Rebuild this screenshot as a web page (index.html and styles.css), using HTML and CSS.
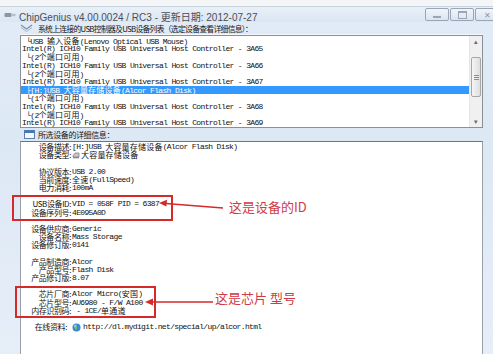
FILE: index.html
```html
<!DOCTYPE html>
<html lang="zh-CN">
  <head>
    <meta charset="UTF-8" />
    <meta name="viewport" content="width=device-width, initial-scale=1.0" />
    <title>ChipGenius v4.00.0024 / RC3</title>
    <link rel="stylesheet" href="styles.css">
  </head>
  <body>
    <div class="window">
      <div class="desk"></div>
      <div class="titlebar">
        <svg class="app-icon" width="12" height="8" viewBox="0 0 12 8">
          <rect x="0.5" y="2" width="7" height="4" rx="1" fill="#8a96a6" />
          <rect x="7.5" y="2.8" width="4" height="2.4" fill="#b5bfcc" />
        </svg>
        <span class="title">ChipGenius v4.00.0024 / RC3 - 更新日期: 2012-07-27</span>
        <div class="win-btns">
          <span class="wbtn"><i class="glyph-min"></i></span>
          <span class="wbtn"><i class="glyph-max"></i></span>
          <span class="wbtn wbtn-close">&#x2715;</span>
        </div>
      </div>

      <div class="client">
        <div class="section-head">
          <svg class="head-icon" width="13" height="8" viewBox="0 0 13 8">
            <polyline points="1,1 6.5,5 12,1" fill="none" stroke="#7f8fa6" stroke-width="1.2" />
            <polyline points="1,3.5 6.5,7.5 12,3.5" fill="none" stroke="#a5b2c4" stroke-width="1" />
          </svg>
          <span class="head-text-tight">系统上连接的USB控制器及USB设备列表（选定设备查看详细信息）：</span>
        </div>

        <div class="listbox">
          <div class="list-rows mono">
            <div class="lrow"> └USB <span class="zh">输入设备</span>(Lenovo Optical USB Mouse)</div>
            <div class="lrow">Intel(R) ICH10 Family USB Universal Host Controller - 3A65</div>
            <div class="lrow"> └(2<span class="zh">个端口可用</span>)</div>
            <div class="lrow">Intel(R) ICH10 Family USB Universal Host Controller - 3A66</div>
            <div class="lrow"> └(2<span class="zh">个端口可用</span>)</div>
            <div class="lrow">Intel(R) ICH10 Family USB Universal Host Controller - 3A67</div>
            <div class="lrow selected"> ├[H:]USB <span class="zh">大容量存储设备</span>(Alcor Flash Disk)</div>
            <div class="lrow"> └(1<span class="zh">个端口可用</span>)</div>
            <div class="lrow">Intel(R) ICH10 Family USB Universal Host Controller - 3A68</div>
            <div class="lrow"> └(2<span class="zh">个端口可用</span>)</div>
            <div class="lrow">Intel(R) ICH10 Family USB Universal Host Controller - 3A69</div>
          </div>
          <div class="scrollbar">
            <div class="sb-arrow">&#x25B4;</div>
            <div class="sb-track">
              <div class="sb-thumb"><i></i><i></i><i></i></div>
            </div>
            <div class="sb-arrow">&#x25BE;</div>
          </div>
        </div>

        <div class="section-head section-head-2">
          <svg class="head-icon" width="11" height="9" viewBox="0 0 11 9">
            <rect x="0.5" y="0.5" width="10" height="8" fill="#f4f8fc" stroke="#5a7fae" />
            <rect x="0.5" y="0.5" width="10" height="2.5" fill="#3f78c0" />
          </svg>
          <span>所选设备的详细信息：</span>
        </div>

        <div class="details">
          <div class="drow"><span class="lbl">设备描述:</span><span class="val mono">[H:]USB <span class="zh">大容量存储设备</span>(Alcor Flash Disk)</span></div>
          <div class="drow"><span class="lbl">设备类型:</span><span class="val mono"><svg class="mini-icon" width="8" height="7" viewBox="0 0 8 7"><path d="M1 4 L3 1 L7 1 L7 5 L1 5 Z" fill="#c9c9c9" stroke="#777" stroke-width="0.7" /><rect x="1" y="5" width="6" height="1.3" fill="#888" /></svg><span class="zh">大容量存储设备</span></span></div>
          <div class="drow blank"></div>
          <div class="drow"><span class="lbl">协议版本:</span><span class="val mono">USB 2.00</span></div>
          <div class="drow"><span class="lbl">当前速度:</span><span class="val mono"><span class="zh">全速</span>(FullSpeed)</span></div>
          <div class="drow"><span class="lbl">电力消耗:</span><span class="val mono">100mA</span></div>
          <div class="drow blank"></div>
          <div class="drow"><span class="lbl">USB设备ID:</span><span class="val mono">VID = 058F PID = 6387</span></div>
          <div class="drow"><span class="lbl">设备序列号:</span><span class="val mono">4E095A0D</span></div>
          <div class="drow blank"></div>
          <div class="drow"><span class="lbl">设备供应商:</span><span class="val mono">Generic</span></div>
          <div class="drow"><span class="lbl">设备名称:</span><span class="val mono">Mass Storage</span></div>
          <div class="drow"><span class="lbl">设备修订版:</span><span class="val mono">0141</span></div>
          <div class="drow blank"></div>
          <div class="drow"><span class="lbl">产品制造商:</span><span class="val mono">Alcor</span></div>
          <div class="drow"><span class="lbl">产品型号:</span><span class="val mono">Flash Disk</span></div>
          <div class="drow"><span class="lbl">产品修订版:</span><span class="val mono">8.07</span></div>
          <div class="drow blank"></div>
          <div class="drow"><span class="lbl">芯片厂商:</span><span class="val mono">Alcor Micro(<span class="zh">安国</span>)</span></div>
          <div class="drow"><span class="lbl">芯片型号:</span><span class="val mono">AU6980 - F/W A100</span></div>
          <div class="drow"><span class="lbl">内存识别码:</span><span class="val mono"> - 1CE/<span class="zh">单通道</span></span></div>
          <div class="drow blank"></div>
          <div class="drow"><span class="lbl lbl-link">在线资料:</span><span class="val mono"><svg class="mini-icon globe" width="9" height="9" viewBox="0 0 9 9"><circle cx="4.5" cy="4.5" r="4" fill="#3d86d0" /><path d="M2 3 Q3.5 1.5 5 2.5 Q4 4 5.5 5 Q4.5 7 3 6.5 Q3.5 5 2 4.5 Z" fill="#6cc06a" /><circle cx="3.2" cy="2.8" r="1.3" fill="#bfe0ff" opacity="0.6" /></svg>http://dl.mydigit.net/special/up/alcor.html</span></div>
        </div>
      </div>

      <!-- annotations drawn over the screenshot -->
      <div class="note-box note-box-id"></div>
      <div class="note-box note-box-chip"></div>
      <svg class="note-arrows" width="493" height="354" viewBox="0 0 493 354">
        <line x1="223" y1="208" x2="166" y2="203.5" stroke="#d42a2a" stroke-width="1.3" />
        <polygon points="159,203 167,199.8 166.4,206.6" fill="#d42a2a" />
        <line x1="213" y1="302" x2="152" y2="302" stroke="#d42a2a" stroke-width="1.3" />
        <polygon points="145,302 153,298.6 153,305.4" fill="#d42a2a" />
      </svg>
      <div class="note-text note-text-id">这是设备的ID</div>
      <div class="note-text note-text-chip">这是芯片 型号</div>
    </div>
  </body>
</html>
```

FILE: styles.css
```css
body {
  margin: 0;
  background: #ffffff;
}
.window {
  width: 493px;
  height: 354px;
  overflow: hidden;
  position: relative;
  background: linear-gradient(180deg, #e2ecf8, #dde8f5 40%, #e6eef8);
  font-family: "Noto Sans CJK SC", sans-serif;
  color: #111;
}
.desk {
  height: 6px;
  background: #f3f5f7;
  border-bottom: 1px solid #c9d3de;
}
.titlebar {
  height: 15px;
  display: flex;
  align-items: center;
  padding-left: 4px;
  gap: 3px;
  background: linear-gradient(180deg, #e9f0f8, #dae6f3);
}
.app-icon {
  flex: none;
}
.title {
  font-family: "Liberation Sans", "Noto Sans CJK SC", sans-serif;
  font-size: 10px;
  color: #4a4f57;
  white-space: nowrap;
  padding-top: 3px;
}
.win-btns {
  margin-left: auto;
  align-self: flex-start;
  margin-top: 1px;
  display: flex;
  gap: 1px;
  margin-right: -6px;
}
.wbtn {
  width: 22px;
  height: 11px;
  border: 1px solid #98a6b8;
  border-radius: 2px;
  background: linear-gradient(180deg, #f1f5fa, #dbe4ee);
  display: flex;
  align-items: center;
  justify-content: center;
  font-size: 8px;
  color: #8d99a8;
}
.glyph-min {
  width: 8px;
  height: 2px;
  margin-top: 4px;
  background: #9aa6b5;
}
.glyph-max {
  width: 7px;
  height: 5px;
  border: 1px solid #9aa6b5;
  border-top-width: 2px;
}
.client {
  padding: 0 10px 0 20px;
}
.section-head {
  height: 12px;
  display: flex;
  align-items: center;
  gap: 5px;
  font-size: 8px;
  letter-spacing: -0.4px;
  white-space: nowrap;
  color: #151515;
  border-bottom: 1px solid #f4f8fc;
}
.head-text-tight {
  font-size: 7.8px;
  letter-spacing: -0.7px;
}
.section-head-2 {
  height: 13px;
  padding-left: 4px;
  gap: 3px;
  border-bottom: none;
}
.head-icon {
  flex: none;
}
.mono {
  font-family: "Liberation Mono", "DejaVu Sans Mono", "Noto Sans CJK SC", monospace;
  font-size: 8px;
  letter-spacing: -0.65px;
}
.zh {
  font-family: "Noto Sans CJK SC", sans-serif;
  letter-spacing: 0.2px;
}
.listbox {
  height: 91px;
  border: 1px solid #8a9098;
  background: #ffffff;
  display: flex;
}
.list-rows {
  flex: 1;
  padding-top: 1px;
  overflow: hidden;
}
.lrow {
  height: 8.2px;
  line-height: 8.2px;
  padding-left: 1px;
  white-space: pre;
  color: #111;
}
.lrow.selected {
  background: #3399ff;
  color: #ffffff;
}
.scrollbar {
  width: 12px;
  display: flex;
  flex-direction: column;
  background: #f0f0f0;
  border-left: 1px solid #e6e6e6;
}
.sb-arrow {
  height: 11px;
  font-size: 7px;
  line-height: 11px;
  text-align: center;
  color: #6a6a6a;
}
.sb-track {
  flex: 1;
  padding-top: 10px;
}
.sb-thumb {
  height: 38px;
  margin: 0 1px;
  border: 1px solid #a7a7a7;
  border-radius: 2px;
  background: linear-gradient(90deg, #f5f5f5, #dedede);
  display: flex;
  flex-direction: column;
  align-items: center;
  justify-content: center;
  gap: 1px;
}
.sb-thumb i {
  width: 5px;
  height: 1px;
  background: #8e8e8e;
}
.details {
  height: 220px;
  border: 1px solid #9aa0a8;
  border-top-color: #6f757c;
  border-bottom: none;
  background: #ffffff;
  padding-top: 1px;
}
.drow {
  height: 8.2px;
  line-height: 8.2px;
  display: flex;
  white-space: pre;
}
.lbl {
  width: 50px;
  flex: none;
  text-align: right;
  font-size: 8px;
  letter-spacing: -0.4px;
  color: #111;
}
.lbl-link {
  width: 46px;
  margin-right: 4px;
}
.val {
  margin-left: 1px;
  color: #111;
  display: flex;
  align-items: center;
}
.mini-icon {
  margin-right: 1px;
}
.globe {
  margin-right: 2px;
}
.note-box {
  position: absolute;
  border: 2px solid #d42a2a;
}
.note-box-id {
  left: 12px;
  top: 195px;
  width: 157px;
  height: 22px;
}
.note-box-chip {
  left: 15px;
  top: 286px;
  width: 137px;
  height: 28px;
}
.note-arrows {
  position: absolute;
  left: 0;
  top: 0;
}
.note-text {
  position: absolute;
  font-family: "Noto Sans CJK SC", sans-serif;
  font-size: 13px;
  line-height: 16px;
  color: #cf3b45;
  white-space: nowrap;
}
.note-text-id {
  left: 229px;
  top: 199px;
}
.note-text-chip {
  left: 215px;
  top: 290px;
}
```
